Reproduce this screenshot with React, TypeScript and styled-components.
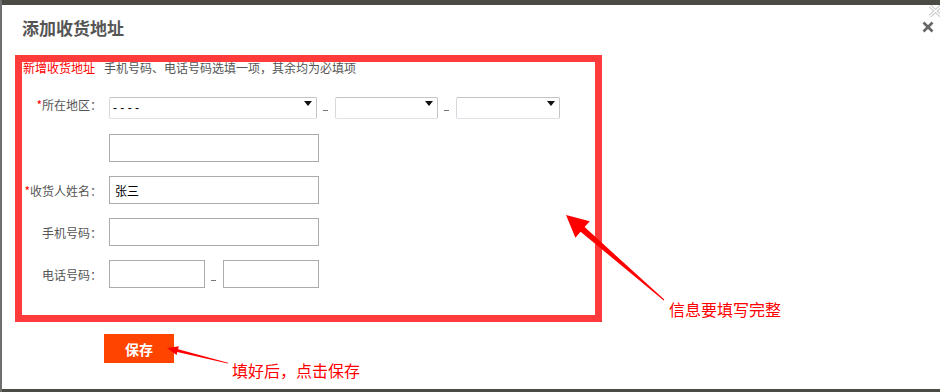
import React from "react";
import styled, { createGlobalStyle } from "styled-components";

const GlobalStyle = createGlobalStyle`
  html, body { margin: 0; padding: 0; }
  body {
    background: #4b4a45;
    font-family: "Noto Sans CJK SC", "Liberation Sans", sans-serif;
    width: 940px;
    height: 392px;
    overflow: hidden;
  }
`;

const Page = styled.div`
  position: relative;
  width: 940px;
  height: 392px;
  box-sizing: border-box;
  padding: 5px 0 3px 2px;
  background: linear-gradient(90deg, #6f6f6f 0 2px, transparent 2px);
`;

const Dialog = styled.div`
  position: relative;
  height: 384px;
  background: #fff;
  overflow: hidden;
  display: flex;
  flex-direction: column;
`;

const Header = styled.div`
  display: flex;
  justify-content: space-between;
  align-items: flex-start;
  height: 50px;
  box-sizing: border-box;
  padding: 12px 6px 0 20px;
`;

const Title = styled.h2`
  margin: 0;
  font-size: 17px;
  line-height: 22px;
  font-weight: 700;
  color: #555;
`;

const CloseButton = styled.button`
  margin-top: 4px;
  width: 12px;
  height: 12px;
  padding: 0;
  border: none;
  background: none;
  display: flex;
`;

const GhostClose = styled.div`
  position: absolute;
  top: 0;
  right: -3px;
  width: 15px;
  height: 12px;
  display: flex;
`;

const FormBox = styled.div`
  margin-left: 13px;
  width: 587px;
  height: 267px;
  box-sizing: border-box;
  border: 7px solid #ff3b3b;
  display: flex;
  flex-direction: column;
`;

const Notice = styled.div`
  font-size: 12px;
  line-height: 14px;
  height: 15px;
  color: #555;
  margin-top: -1px;
  padding-left: 1px;
`;

const NoticeHead = styled.span`
  color: #ff0000;
  margin-right: 9px;
`;

const Row = styled.div<{ $h: number; $mt: number }>`
  display: flex;
  align-items: center;
  height: ${(p) => p.$h}px;
  margin-top: ${(p) => p.$mt}px;
`;

const Label = styled.label`
  width: 80px;
  margin-right: 7px;
  text-align: right;
  font-size: 12px;
  color: #555;
  white-space: nowrap;
`;

const Star = styled.span`
  color: #ff0000;
`;

const SelectWrap = styled.div<{ $w: number }>`
  position: relative;
  width: ${(p) => p.$w}px;
  height: 22px;
`;

const Select = styled.select`
  appearance: none;
  width: 100%;
  height: 100%;
  box-sizing: border-box;
  border: 1px solid #c4c4c4;
  border-bottom-color: #dfe3e8;
  border-left-color: #d6d9dd;
  border-radius: 2px;
  background: #fff;
  padding: 0 0 0 3px;
  font-family: "Liberation Sans", sans-serif;
  font-size: 12px;
  color: #000;
  outline: none;
`;

const Caret = styled.span`
  position: absolute;
  right: 5px;
  top: 8px;
  width: 0;
  height: 0;
  border-left: 4px solid transparent;
  border-right: 4px solid transparent;
  border-top: 5px solid #111;
  pointer-events: none;
`;

const Dash = styled.span`
  width: 5px;
  height: 1px;
  background: #777;
  margin: 0 7px 0 6px;
  transform: translateY(6px);
`;

const Input = styled.input<{ $w: number }>`
  width: ${(p) => p.$w}px;
  height: 28px;
  box-sizing: border-box;
  border: 1px solid #ababab;
  padding: 0 5px;
  font-family: "Noto Sans CJK SC", sans-serif;
  font-size: 12px;
  color: #000;
  outline: none;
  background: #fff;
`;

const SaveButton = styled.button`
  margin: 12px 0 0 102px;
  width: 70px;
  height: 29px;
  border: none;
  background: #ff4400;
  color: #fff;
  font-family: "Noto Sans CJK SC", sans-serif;
  font-size: 14px;
  font-weight: 700;
  padding: 0;
  align-self: flex-start;
`;

const Overlay = styled.svg`
  position: absolute;
  left: 0;
  top: 0;
  pointer-events: none;
`;

const Note = styled.span<{ $left: number; $top: number }>`
  position: absolute;
  left: ${(p) => p.$left}px;
  top: ${(p) => p.$top}px;
  font-size: 16px;
  line-height: 16px;
  color: #ff0000;
  white-space: nowrap;
`;

export default function App() {
  return (
    <Page>
      <GlobalStyle />
      <Dialog>
        <Header>
          <Title>添加收货地址</Title>
          <CloseButton aria-label="关闭">
            <svg width="12" height="12" viewBox="0 0 12 12">
              <path d="M1.5 1.5 L10.5 10.5 M10.5 1.5 L1.5 10.5" stroke="#666" strokeWidth="2.6" />
            </svg>
          </CloseButton>
        </Header>
        <GhostClose>
          <svg width="15" height="12" viewBox="0 0 15 12">
            <path d="M2 1 L13 11 M13 1 L2 11" stroke="#c8c8c8" strokeWidth="3.4" />
            <path d="M2 1 L13 11 M13 1 L2 11" stroke="#fff" strokeWidth="1.4" />
          </svg>
        </GhostClose>

        <FormBox>
          <Notice>
            <NoticeHead>新增收货地址</NoticeHead>手机号码、电话号码选填一项，其余均为必填项
          </Notice>
          <Row $h={22} $mt={17}>
            <Label>
              <Star>*</Star>所在地区：
            </Label>
            <SelectWrap $w={208}>
              <Select defaultValue="">
                <option value="">- - - -</option>
              </Select>
              <Caret />
            </SelectWrap>
            <Dash />
            <SelectWrap $w={103}>
              <Select defaultValue="">
                <option value=""></option>
              </Select>
              <Caret />
            </SelectWrap>
            <Dash />
            <SelectWrap $w={104}>
              <Select defaultValue="">
                <option value=""></option>
              </Select>
              <Caret />
            </SelectWrap>
          </Row>
          <Row $h={28} $mt={19}>
            <Label />
            <Input $w={210} />
          </Row>
          <Row $h={28} $mt={14}>
            <Label>
              <Star>*</Star>收货人姓名：
            </Label>
            <Input $w={210} defaultValue="张三" />
          </Row>
          <Row $h={28} $mt={14}>
            <Label>手机号码：</Label>
            <Input $w={210} />
          </Row>
          <Row $h={28} $mt={14}>
            <Label>电话号码：</Label>
            <Input $w={96} />
            <Dash />
            <Input $w={96} />
          </Row>
        </FormBox>

        <SaveButton>保存</SaveButton>
      </Dialog>

      <Overlay width="940" height="392" viewBox="0 0 940 392">
        <polygon
          points="566,215 589.8,221.2 584.6,227.1 664.3,299.6 663.7,300.4 580.6,231.7 575.4,237.7"
          fill="#ff0000"
        />
        <polygon
          points="167,348 178.8,346.3 178.1,349.2 228,362.8 227.8,363.4 177.3,352 176.6,355"
          fill="#ff0000"
        />
      </Overlay>
      <Note $left={669} $top={301}>信息要填写完整</Note>
      <Note $left={232} $top={362}>填好后，点击保存</Note>
    </Page>
  );
}
